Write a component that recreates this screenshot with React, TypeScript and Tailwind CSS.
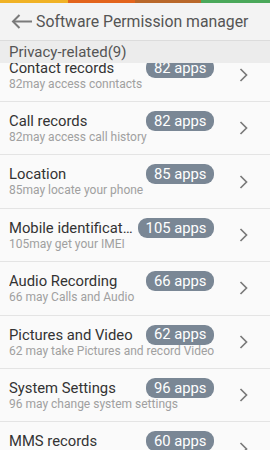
const rows = [
  { title: "Contact records", count: 82, desc: "82may access conntacts" },
  { title: "Call records", count: 82, desc: "82may access call history" },
  { title: "Location", count: 85, desc: "85may locate your phone" },
  { title: "Mobile identification", count: 105, desc: "105may get your IMEI" },
  { title: "Audio Recording", count: 66, desc: "66 may Calls and Audio" },
  { title: "Pictures and Video", count: 62, desc: "62 may take Pictures and record Video" },
  { title: "System Settings", count: 96, desc: "96 may change system settings" },
  { title: "MMS records", count: 60, desc: "60 may access MMS records" },
];

function Chevron() {
  return (
    <svg width="9" height="14" viewBox="0 0 9 14" fill="none">
      <polyline points="1.5,1 7.5,7 1.5,13" stroke="#7a7a7a" strokeWidth="1.7" />
    </svg>
  );
}

function BackArrow() {
  return (
    <svg width="21" height="15" viewBox="0 0 21 15" fill="none">
      <line x1="2" y1="7.5" x2="21" y2="7.5" stroke="#7a7a7a" strokeWidth="2" />
      <polyline points="8.5,1 2,7.5 8.5,14" stroke="#7a7a7a" strokeWidth="2" />
    </svg>
  );
}

function PermissionRow({ title, count, desc }: { title: string; count: number; desc: string }) {
  return (
    <div className="flex h-[53.4px] shrink-0 items-center border-b border-[#e4e4e4]">
      <div className="flex w-[214px] min-w-0 flex-col self-start pl-[9px] pt-[10px]">
        <div className="flex h-[18px] items-center gap-1">
          <span className="min-w-0 flex-1 truncate text-[14.8px] leading-[18px] text-[#333]">{title}</span>
          <span className="flex h-[20px] shrink-0 items-center rounded-[9px] bg-[#7a8795] px-[7.5px] text-[14.8px] text-white">
            {count} apps
          </span>
        </div>
        <div className="whitespace-nowrap text-[12px] leading-[15px] text-[#a0a0a0]">{desc}</div>
      </div>
      <div className="flex flex-1 justify-center pl-[2px]">
        <Chevron />
      </div>
    </div>
  );
}

export default function App() {
  return (
    <div className="flex h-[450px] w-[270px] flex-col overflow-hidden bg-[#fafafa] font-['Roboto',sans-serif]">
      <div className="flex h-[3px] shrink-0">
        <div className="w-[68px] bg-[#f0b225]" />
        <div className="w-[67px] bg-[#e3641c]" />
        <div className="w-[66px] bg-[#b9682a]" />
        <div className="flex-1 bg-[#4aa85a]" />
      </div>
      <div className="flex h-[38px] shrink-0 items-center gap-[4px] border-b border-[#dcdcdc] bg-[#f3f3f3] pl-[11px]">
        <BackArrow />
        <span className="text-[15.8px] text-[#555]">Software Permission manager</span>
      </div>
      <div className="flex h-[22px] shrink-0 items-center bg-[#ececec] pl-[9px] pt-[1px] text-[15px] text-[#555]">
        Privacy-related(9)
      </div>
      <div className="flex flex-1 flex-col overflow-hidden">
        <div className="mt-[-14.4px] flex flex-col">
          {rows.map((r) => (
            <PermissionRow key={r.title} {...r} />
          ))}
        </div>
      </div>
    </div>
  );
}
